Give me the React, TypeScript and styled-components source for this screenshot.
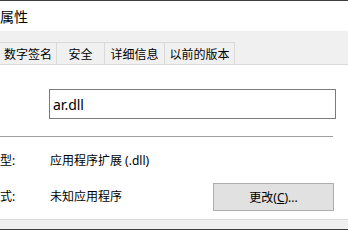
import React from "react";
import styled, { createGlobalStyle } from "styled-components";

const GlobalStyle = createGlobalStyle`
  html, body {
    margin: 0;
    padding: 0;
    background: #ffffff;
  }
  body {
    width: 348px;
    height: 230px;
    overflow: hidden;
    font-family: "Noto Sans", "Noto Sans CJK SC", sans-serif;
    color: #000000;
  }
`;

const Window = styled.div`
  width: 348px;
  height: 230px;
  box-sizing: border-box;
  border-top: 1px solid #3f3f3f;
  border-bottom: 1px solid #3f3f3f;
  display: flex;
  flex-direction: column;
  background: #f0f0f0;
`;

const TitleBar = styled.div`
  height: 30px;
  flex-shrink: 0;
  background: #ffffff;
  display: flex;
  align-items: center;
  font-size: 14px;
`;

const TabStrip = styled.div`
  display: flex;
  flex-shrink: 0;
  padding-top: 11px;
  background: #f0f0f0;
`;

const Tab = styled.div<{ $w: number }>`
  width: ${(p) => p.$w}px;
  height: 22px;
  box-sizing: border-box;
  border-top: 1px solid #d9d9d9;
  border-right: 1px solid #d9d9d9;
  display: flex;
  align-items: center;
  justify-content: center;
  font-size: 12px;
  background: #f0f0f0;
`;

const Page = styled.div`
  height: 154px;
  flex-shrink: 0;
  background: #ffffff;
  border-top: 1px solid #d9d9d9;
  border-bottom: 1px solid #d9d9d9;
  display: flex;
  flex-direction: column;
  padding-top: 24px;
  box-sizing: border-box;
  height: 156px;
`;

const NameBox = styled.div`
  margin-left: 49px;
  width: 287px;
  height: 30px;
  flex-shrink: 0;
  box-sizing: border-box;
  border: 1px solid #7a7a7a;
  display: flex;
  align-items: center;
  padding-left: 3px;
  font-size: 14px;
`;

const Separator = styled.div`
  width: 333px;
  height: 1px;
  flex-shrink: 0;
  background: #a0a0a0;
  margin-top: 17px;
`;

const InfoGrid = styled.div`
  display: grid;
  grid-template-columns: 50px 163px 121px;
  grid-template-rows: 20px 28px;
  row-gap: 12px;
  margin-top: 14px;
  font-size: 12px;
  align-items: start;
`;

const Cell = styled.div<{ $shift?: number }>`
  line-height: 20px;
  white-space: nowrap;
  margin-top: ${(p) => p.$shift ?? 0}px;
`;

const Button = styled.div`
  height: 28px;
  box-sizing: border-box;
  background: #e1e1e1;
  border: 1px solid #adadad;
  display: flex;
  align-items: center;
  justify-content: center;
  font-size: 12px;
`;

const Key = styled.span`
  text-decoration: underline;
`;

const tabs = [
  { label: "数字签名", w: 57 },
  { label: "安全", w: 48 },
  { label: "详细信息", w: 60 },
  { label: "以前的版本", w: 70 },
];

export default function App() {
  return (
    <>
      <GlobalStyle />
      <Window>
        <TitleBar>属性</TitleBar>
        <TabStrip>
          {tabs.map((t) => (
            <Tab key={t.label} $w={t.w}>
              {t.label}
            </Tab>
          ))}
        </TabStrip>
        <Page>
          <NameBox>ar.dll</NameBox>
          <Separator />
          <InfoGrid>
            <Cell>型:</Cell>
            <Cell>应用程序扩展 (.dll)</Cell>
            <span />
            <Cell $shift={4}>式:</Cell>
            <Cell $shift={4}>未知应用程序</Cell>
            <Button>
              更改(<Key>C</Key>)...
            </Button>
          </InfoGrid>
        </Page>
      </Window>
    </>
  );
}
